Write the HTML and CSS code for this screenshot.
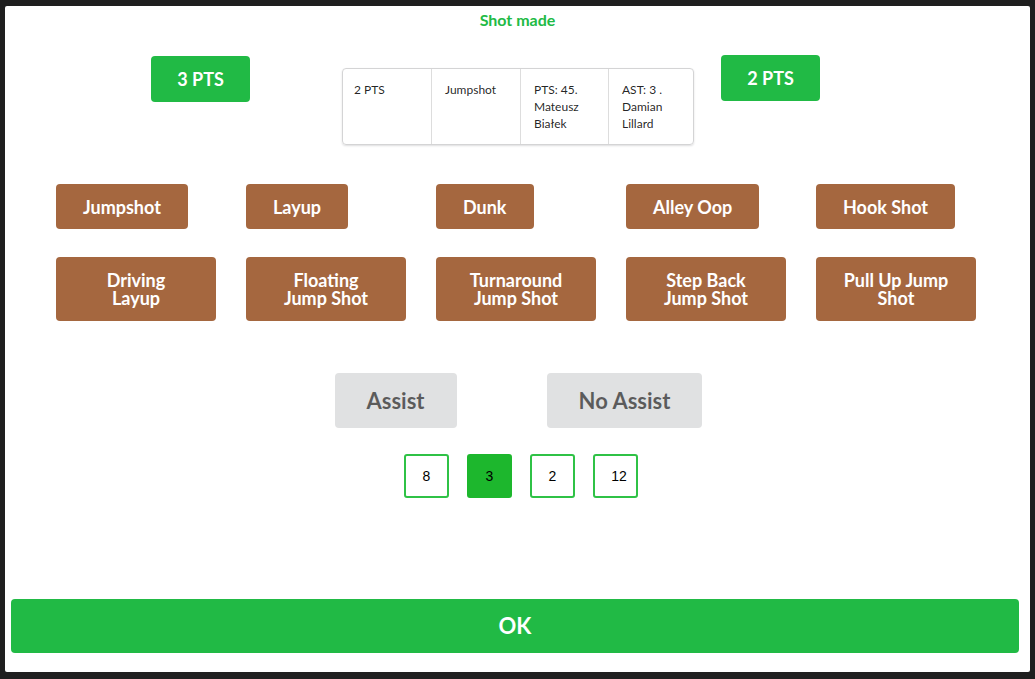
FILE: index.html
```html
<!DOCTYPE html>
<html>
<head>
<meta charset="utf-8">
<link rel="stylesheet" href="styles.css">
</head>
<body>
<div class="panel">
  <div class="title">Shot made</div>
  <div class="top-row">
    <button class="btn green pts pts-left">3 PTS</button>
    <div class="summary">
      <div class="cell">2 PTS</div>
      <div class="cell">Jumpshot</div>
      <div class="cell">PTS: 45.<br>Mateusz<br>Białek</div>
      <div class="cell">AST: 3 .<br>Damian<br>Lillard</div>
    </div>
    <button class="btn green pts pts-right">2 PTS</button>
  </div>
  <div class="shots">
    <div class="slot"><button class="btn brown">Jumpshot</button></div>
    <div class="slot"><button class="btn brown">Layup</button></div>
    <div class="slot"><button class="btn brown">Dunk</button></div>
    <div class="slot"><button class="btn brown">Alley Oop</button></div>
    <div class="slot"><button class="btn brown">Hook Shot</button></div>
    <div class="slot"><button class="btn brown wide">Driving<br>Layup</button></div>
    <div class="slot"><button class="btn brown wide">Floating<br>Jump Shot</button></div>
    <div class="slot"><button class="btn brown wide">Turnaround<br>Jump Shot</button></div>
    <div class="slot"><button class="btn brown wide">Step Back<br>Jump Shot</button></div>
    <div class="slot"><button class="btn brown wide">Pull Up Jump<br>Shot</button></div>
  </div>
  <div class="assist-row">
    <button class="btn grey big">Assist</button>
    <button class="btn grey big">No Assist</button>
  </div>
  <div class="numbers">
    <button class="num">8</button>
    <button class="num active">3</button>
    <button class="num">2</button>
    <button class="num shifted">12</button>
  </div>
  <button class="btn green ok">OK</button>
</div>
</body>
</html>
```
FILE: styles.css
```css
* { box-sizing: border-box; }
html, body { margin: 0; padding: 0; }
body {
  background: #1f1f1f;
  font-family: Lato, "Noto Sans", sans-serif;
  width: 1035px;
  height: 679px;
  overflow: hidden;
}
.panel {
  margin: 6px 5px 7px 5px;
  height: 666px;
  background: #fff;
  border-radius: 2px;
  display: flex;
  flex-direction: column;
  padding-top: 4px;
  padding-bottom: 19px;
}
.title {
  text-align: center;
  color: #21ba45;
  font-weight: 700;
  font-size: 16px;
  line-height: 20px;
}
.btn {
  border: none;
  font-family: Lato, "Noto Sans", sans-serif;
  font-weight: 700;
  color: #fff;
  border-radius: 4px;
  text-align: center;
  cursor: pointer;
  margin: 0;
}
.green { background: #21ba45; }
.brown { background: #a5673f; }
.grey { background: #e0e1e2; color: rgba(0,0,0,.6); }

.top-row {
  display: flex;
  align-items: flex-start;
  margin-top: 25px;
  padding-left: 146px;
}
.pts {
  font-size: 18px;
  line-height: 18px;
  padding: 14px 0;
  width: 99px;
}
.pts-left { margin-top: 1px; height: 46px; }
.pts-right { height: 46px; margin-left: 27px; }
.summary {
  margin-top: 13px;
  margin-left: 92px;
  width: 352px;
  display: grid;
  grid-template-columns: 88px 89px 88px 1fr;
  border: 1px solid #d4d4d5;
  border-radius: 4px;
  box-shadow: 0 1px 2px rgba(34,36,38,.15);
  font-size: 12px;
  line-height: 17px;
  color: rgba(0,0,0,.87);
}
.cell {
  padding: 12px 12px 12px 11px;
  height: 75px;
  border-left: 1px solid #ddd;
}
.cell:first-child { border-left: none; }
.cell:nth-child(n+2) { padding-left: 13px; }

.shots {
  margin-top: 39px;
  padding-left: 51px;
  display: grid;
  grid-template-columns: repeat(5, 160px);
  column-gap: 30px;
  row-gap: 28px;
}
.slot { display: flex; align-items: flex-start; }
.brown {
  font-size: 18px;
  line-height: 18px;
  padding: 13.5px 27px;
}
.brown.wide {
  width: 160px;
  padding: 14px 0;
  height: 64px;
}
.assist-row {
  margin-top: 52px;
  display: flex;
  justify-content: center;
  gap: 90px;
  padding-left: 2px;
}
.big {
  font-size: 22px;
  line-height: 22px;
  padding: 16.5px 32px;
  height: 55px;
}
.numbers {
  margin-top: 26px;
  display: flex;
  justify-content: center;
  gap: 18px;
  padding-left: 7px;
}
.num {
  width: 45px;
  height: 44px;
  border: 2px solid #2fc246;
  border-radius: 3px;
  background: #fff;
  font-family: "Liberation Sans", Arial, sans-serif;
  font-size: 14px;
  color: #000;
  padding: 0;
  margin: 0;
}
.num.shifted { padding-left: 7px; }
.num.active {
  background: #1db72d;
  border-color: #1db72d;
}
.ok {
  margin-top: auto;
  margin-left: 6px;
  margin-right: 11px;
  height: 54px;
  font-size: 22px;
  line-height: 22px;
  padding: 0;
}
```
